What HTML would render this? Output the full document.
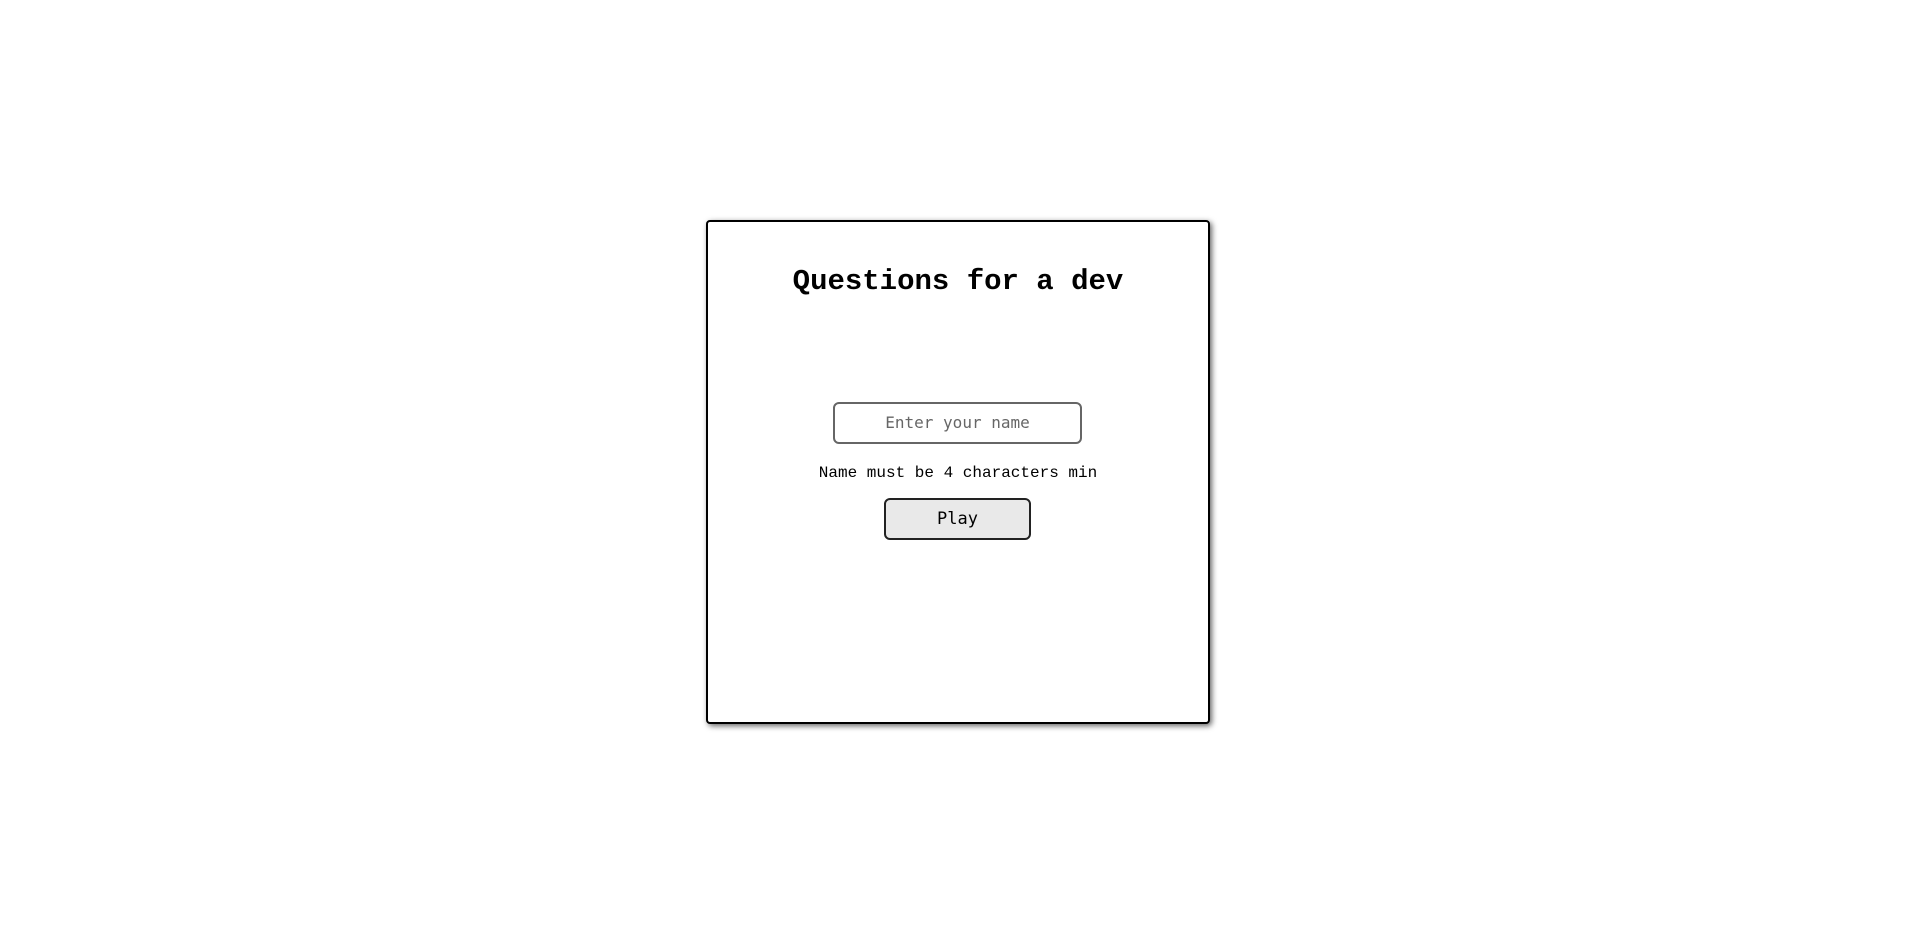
<!DOCTYPE html>
<html><head><style>
html,body{margin:0;padding:0;background:#fff;width:1915px;height:941px;overflow:hidden}
.box{position:absolute;left:706px;top:220px;width:500px;height:500px;border:2px solid #000;border-radius:4px;box-shadow:2px 2px 6px rgba(0,0,0,.6);background:#fff;font-family:"Liberation Mono",monospace}
h1{position:absolute;left:0;right:0;top:40px;margin:0;text-align:center;font-size:29px;font-weight:bold;line-height:40px}
.inp{position:absolute;left:125px;top:180px;width:245px;height:38px;border:2px solid #666;border-radius:6px;text-align:center;line-height:38px;color:#666;font-family:"DejaVu Sans Mono",monospace;font-size:16px}
.msg{position:absolute;left:0;right:0;top:241px;text-align:center;font-size:16px;line-height:20px;color:#000}
.btn{position:absolute;left:176px;top:276px;width:143px;height:38px;border:2px solid #222;border-radius:6px;background:#e9e9e9;text-align:center;line-height:38px;font-size:17px;font-family:"DejaVu Sans Mono",monospace}
</style></head><body>
<div class="box">
<h1>Questions for a dev</h1>
<div class="inp">Enter your name</div>
<div class="msg">Name must be 4 characters min</div>
<div class="btn">Play</div>
</div>
</body></html>
